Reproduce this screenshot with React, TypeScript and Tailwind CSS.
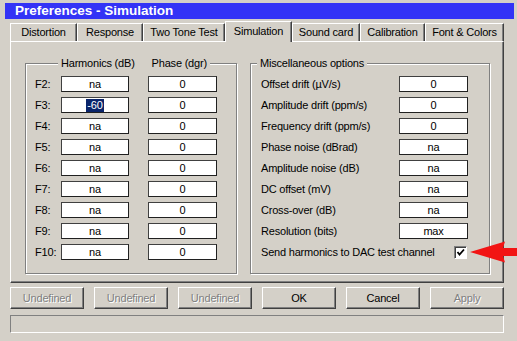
import React from "react";

const font = { fontFamily: "'Liberation Sans', Arial, sans-serif" };

function Tab({ label, w, selected }: { label: string; w: number; selected?: boolean }) {
  if (selected) {
    return (
      <div
        style={{ width: w }}
        className="relative z-10 h-[21px] -mb-[1px] bg-[#d4d0c8] border-t border-l border-white border-r border-r-[#404040] shadow-[inset_-1px_0_0_#808080] flex items-center justify-center pb-[2px] text-black"
      >
        {label}
      </div>
    );
  }
  return (
    <div
      style={{ width: w }}
      className="h-[18px] bg-[#d4d0c8] border-t border-l border-white border-r border-r-[#404040] shadow-[inset_-1px_0_0_#808080] flex items-center justify-center text-black"
    >
      {label}
    </div>
  );
}

function Field({ value, w = 68, selected }: { value: string; w?: number; selected?: boolean }) {
  return (
    <div
      style={{ width: w }}
      className="h-[16px] bg-white border border-t-[#404040] border-l-[#404040] border-r-[#202020] border-b-[#202020] flex items-center justify-center text-black leading-none"
    >
      {selected ? <span className="bg-[#0a246a] text-white px-[1px] py-[1px]">{value}</span> : value}
    </div>
  );
}

function Btn({ label, disabled }: { label: string; disabled?: boolean }) {
  return (
    <div
      className={
        "w-[74px] h-[22px] bg-[#d4d0c8] border border-t-white border-l-white border-r-[#404040] border-b-[#404040] shadow-[inset_-1px_-1px_0_#808080] flex items-center justify-center " +
        (disabled ? "text-[#808080] [text-shadow:1px_1px_0_#ffffff]" : "text-black")
      }
    >
      {label}
    </div>
  );
}

export default function App() {
  const harm = ["na", "-60", "na", "na", "na", "na", "na", "na", "na"];
  const misc: [string, string][] = [
    ["Offset drift (\u00b5V/s)", "0"],
    ["Amplitude drift (ppm/s)", "0"],
    ["Frequency drift (ppm/s)", "0"],
    ["Phase noise (dBrad)", "na"],
    ["Amplitude noise (dB)", "na"],
    ["DC offset (mV)", "na"],
    ["Cross-over (dB)", "na"],
    ["Resolution (bits)", "max"],
  ];
  return (
    <div
      style={font}
      className="relative w-[517px] h-[341px] overflow-hidden bg-[#d4d0c8] text-[11px] tracking-[-0.2px] text-black"
    >
      <div className="pt-[3px] pl-[5px] pr-[3px]">
        <div className="h-[16px] bg-[#3333f6] text-white font-bold text-[13.5px] tracking-normal pl-[10px] flex items-center">
          Preferences - Simulation
        </div>
      </div>

      <div className="pl-[10px] w-[504px]">
        <div className="flex items-end h-[22px] mt-[0px]">
          <Tab label="Distortion" w={67} />
          <Tab label="Response" w={66} />
          <Tab label="Two Tone Test" w={82} />
          <Tab label="Simulation" w={67} selected />
          <Tab label="Sound card" w={68} />
          <Tab label="Calibration" w={65} />
          <Tab label="Font & Colors" w={79} />
        </div>

        <div className="h-[242px] border border-t-white border-l-white border-r-[#404040] border-b-[#404040] shadow-[inset_-1px_-1px_0_#808080] pl-[14px] pt-[21px] flex gap-[13px]">
          {/* Harmonics group */}
          <div className="relative w-[212px] h-[211px] border border-[#808080] shadow-[inset_1px_1px_0_#ffffff,1px_1px_0_#ffffff]">
            <div className="absolute top-[-8px] left-[32px] bg-[#d4d0c8] px-[3px] flex gap-[17px] leading-[14px]">
              <span>Harmonics (dB)</span>
              <span>Phase (dgr)</span>
            </div>
            <div className="pt-[12px] flex flex-col gap-[5px]">
              {harm.map((v, i) => (
                <div key={i} className="flex items-center h-[16px]">
                  <div className="w-[35px] pl-[9px]">F{i + 2}:</div>
                  <Field value={v} w={68} selected={v === "-60"} />
                  <div className="w-[19px]" />
                  <Field value="0" w={69} />
                </div>
              ))}
            </div>
          </div>

          {/* Misc group */}
          <div className="relative w-[240px] h-[211px] border border-[#808080] shadow-[inset_1px_1px_0_#ffffff,1px_1px_0_#ffffff]">
            <div className="absolute top-[-8px] left-[6px] bg-[#d4d0c8] px-[3px] leading-[14px]">
              Miscellaneous options
            </div>
            <div className="pt-[12px] flex flex-col gap-[5px]">
              {misc.map(([l, v], i) => (
                <div key={i} className="flex items-center h-[16px]">
                  <div className="w-[148px] pl-[10px]">{l}</div>
                  <Field value={v} w={69} />
                </div>
              ))}
              <div className="flex items-center h-[16px]">
                <div className="w-[203px] pl-[10px]">Send harmonics to DAC test channel</div>
                <div className="w-[13px] h-[13px] bg-white border border-t-[#808080] border-l-[#808080] border-r-white border-b-white shadow-[inset_1px_1px_0_#404040] flex items-center justify-center">
                  <svg width="9" height="9" viewBox="0 0 9 9">
                    <path d="M1.5 4 L3.5 6.5 L8 1.5" stroke="#000" strokeWidth="1.8" fill="none" />
                  </svg>
                </div>
              </div>
            </div>
          </div>
        </div>

        <div className="flex gap-[10px] mt-[4px]">
          <Btn label="Undefined" disabled />
          <Btn label="Undefined" disabled />
          <Btn label="Undefined" disabled />
          <Btn label="OK" />
          <Btn label="Cancel" />
          <Btn label="Apply" disabled />
        </div>

        <div className="mt-[6px] h-[18px] border border-t-[#808080] border-l-[#808080] border-r-white border-b-white" />
      </div>

      <svg className="absolute left-[470px] top-[241px]" width="47" height="22" viewBox="0 0 47 22">
        <path d="M0 11 L35 0.5 L33 7 L47 7 L47 15 L33 15 L35 21.5 Z" fill="#f21414" />
      </svg>
    </div>
  );
}
